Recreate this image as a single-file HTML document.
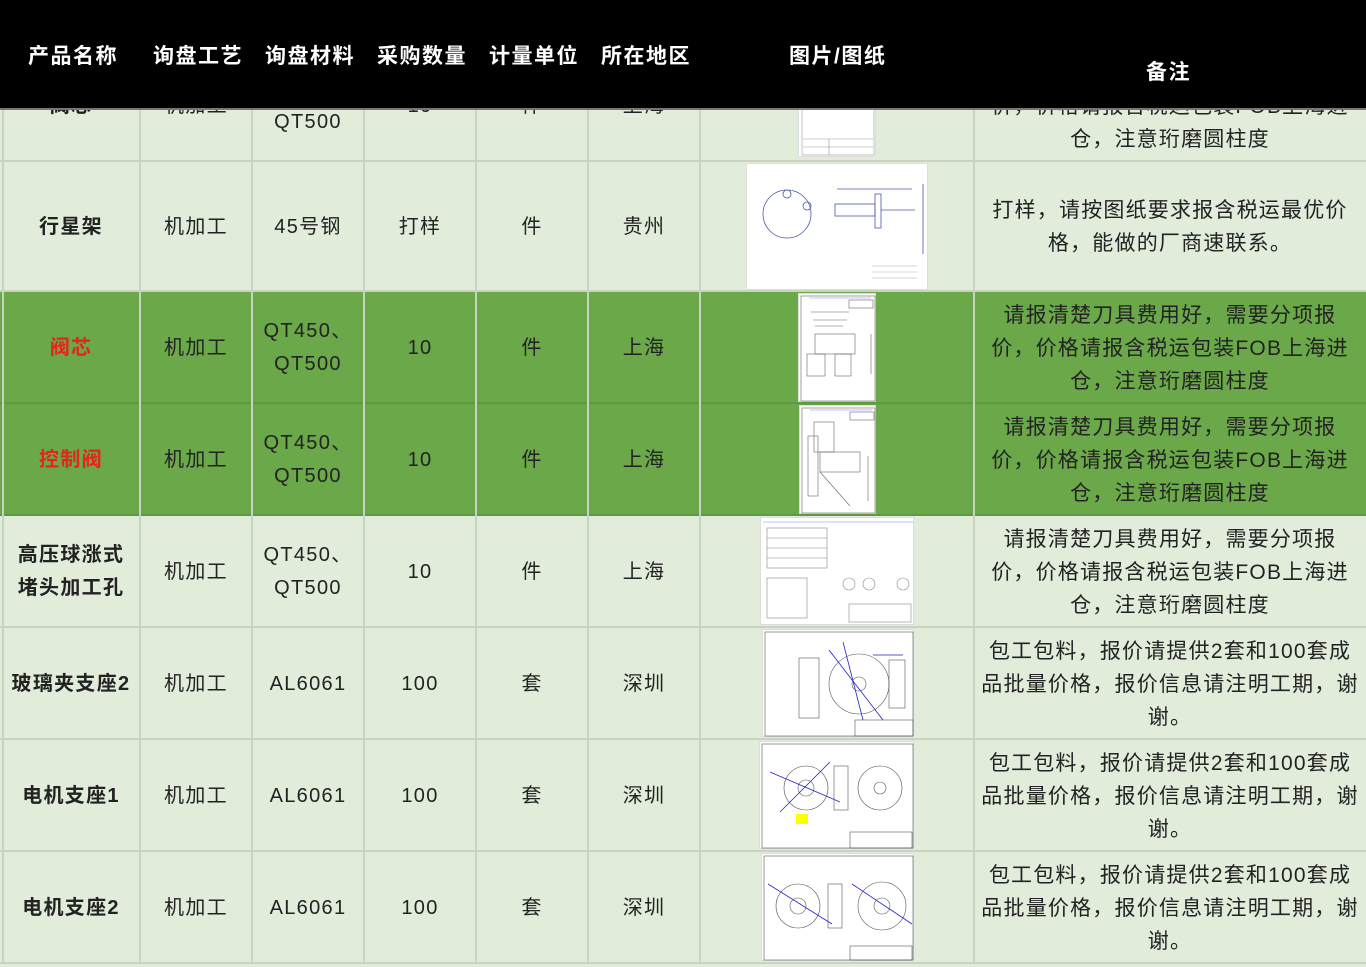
<!DOCTYPE html>
<html><head><meta charset="utf-8"><style>
*{margin:0;padding:0;box-sizing:border-box}
body{width:1366px;height:964px;overflow:hidden;background:#e2ecdb;font-family:"Liberation Sans","Noto Sans CJK SC",sans-serif;position:relative;color:#222}
.hdr{position:absolute;left:0;top:0;width:1366px;height:110px;background:#000;z-index:5;border-bottom:2px solid #777}
.h{position:absolute;color:#fff;font-weight:bold;font-size:21px;top:40px;white-space:nowrap;letter-spacing:1.5px}
.row{position:absolute;left:0;width:1366px;border-bottom:2px solid #c9d4c0}
.g{background:#6aa84a;border-bottom-color:#5e9a40}
.vl{position:absolute;top:0;height:964px;width:2px;background:#c9d4c0;z-index:1}
.c{position:absolute;display:flex;align-items:center;justify-content:center;text-align:center;font-size:20px;line-height:33px;z-index:2;letter-spacing:1.3px;white-space:nowrap}
.r{font-size:21px;letter-spacing:1.2px}
.b{font-weight:bold}
.red{color:#e8231c}
.img{position:absolute;background:#fff;z-index:2;border:1px solid #ddd}
</style></head><body>
<div class="hdr">
<div class="h" style="left:28px">产品名称</div>
<div class="h" style="left:153px">询盘工艺</div>
<div class="h" style="left:265px">询盘材料</div>
<div class="h" style="left:377px">采购数量</div>
<div class="h" style="left:489px">计量单位</div>
<div class="h" style="left:601px">所在地区</div>
<div class="h" style="left:789px">图片/图纸</div>
<div class="h" style="left:1146px;top:56px">备注</div>
</div>

<div class="vl" style="left:2px"></div>
<div class="vl" style="left:139px"></div>
<div class="vl" style="left:251px"></div>
<div class="vl" style="left:363px"></div>
<div class="vl" style="left:475px"></div>
<div class="vl" style="left:587px"></div>
<div class="vl" style="left:699px"></div>
<div class="vl" style="left:973px"></div>

<div class="row" style="top:0;height:162px"></div>
<div class="row" style="top:162px;height:130px"></div>
<div class="row g" style="top:292px;height:112px"></div>
<div class="row g" style="top:404px;height:112px"></div>
<div class="row" style="top:516px;height:112px"></div>
<div class="row" style="top:628px;height:112px"></div>
<div class="row" style="top:740px;height:112px"></div>
<div class="row" style="top:852px;height:112px"></div>

<div class="c b" style="left:2px;width:138px;top:50px;height:112px">阀芯</div>
<div class="c" style="left:140px;width:112px;top:50px;height:112px">机加工</div>
<div class="c" style="left:252px;width:112px;top:50px;height:112px">QT450、<br>QT500</div>
<div class="c" style="left:364px;width:112px;top:50px;height:112px">10</div>
<div class="c" style="left:476px;width:112px;top:50px;height:112px">件</div>
<div class="c" style="left:588px;width:112px;top:50px;height:112px">上海</div>
<div class="c r" style="left:974px;width:392px;top:50px;height:112px">请报清楚刀具费用好，需要分项报<br>价，价格请报含税运包装FOB上海进<br>仓，注意珩磨圆柱度</div>
<div class="img" style="left:798px;top:100px;width:78px;height:57px"><svg width="78" height="57"><g stroke="#999" fill="none" stroke-width=".6"><line x1="4" y1="38" x2="74" y2="38"/><line x1="30" y1="38" x2="30" y2="54"/><line x1="4" y1="46" x2="74" y2="46"/><rect x="3" y="3" width="72" height="51"/></g></svg></div>

<div class="c b" style="left:2px;width:138px;top:162px;height:130px">行星架</div>
<div class="c" style="left:140px;width:112px;top:162px;height:130px">机加工</div>
<div class="c" style="left:252px;width:112px;top:162px;height:130px">45号钢</div>
<div class="c" style="left:364px;width:112px;top:162px;height:130px">打样</div>
<div class="c" style="left:476px;width:112px;top:162px;height:130px">件</div>
<div class="c" style="left:588px;width:112px;top:162px;height:130px">贵州</div>
<div class="c r" style="left:974px;width:392px;top:162px;height:130px">打样，请按图纸要求报含税运最优价<br>格，能做的厂商速联系。</div>
<div class="img" style="left:746px;top:163px;width:182px;height:127px"><svg width="182" height="127"><g fill="none" stroke="#4a5aa8" stroke-width=".8"><circle cx="40" cy="50" r="24"/><circle cx="40" cy="30" r="4"/><circle cx="60" cy="42" r="4"/><rect x="88" y="40" width="40" height="12"/><rect x="128" y="30" width="6" height="34"/><line x1="134" y1="46" x2="168" y2="46"/><line x1="176" y1="20" x2="176" y2="90"/><line x1="90" y1="25" x2="165" y2="25"/></g><g stroke="#aaa" stroke-width=".6"><line x1="125" y1="102" x2="170" y2="102"/><line x1="125" y1="108" x2="170" y2="108"/><line x1="125" y1="114" x2="170" y2="114"/></g></svg></div>

<div class="c b red" style="left:2px;width:138px;top:292px;height:112px">阀芯</div>
<div class="c" style="left:140px;width:112px;top:292px;height:112px">机加工</div>
<div class="c" style="left:252px;width:112px;top:292px;height:112px">QT450、<br>QT500</div>
<div class="c" style="left:364px;width:112px;top:292px;height:112px">10</div>
<div class="c" style="left:476px;width:112px;top:292px;height:112px">件</div>
<div class="c" style="left:588px;width:112px;top:292px;height:112px">上海</div>
<div class="c r" style="left:974px;width:392px;top:292px;height:112px">请报清楚刀具费用好，需要分项报<br>价，价格请报含税运包装FOB上海进<br>仓，注意珩磨圆柱度</div>
<div class="img" style="left:798px;top:293px;width:78px;height:109px"><svg width="78" height="109"><g fill="none" stroke="#666" stroke-width=".6"><rect x="2" y="2" width="74" height="105"/><line x1="10" y1="4" x2="72" y2="4" stroke="#88f"/><rect x="50" y="6" width="24" height="8"/><line x1="12" y1="18" x2="50" y2="18"/><line x1="14" y1="26" x2="48" y2="26"/><line x1="16" y1="32" x2="44" y2="32"/><rect x="16" y="40" width="40" height="20"/><rect x="8" y="60" width="18" height="22"/><rect x="36" y="60" width="16" height="22"/><line x1="72" y1="40" x2="72" y2="80"/></g></svg></div>

<div class="c b red" style="left:2px;width:138px;top:404px;height:112px">控制阀</div>
<div class="c" style="left:140px;width:112px;top:404px;height:112px">机加工</div>
<div class="c" style="left:252px;width:112px;top:404px;height:112px">QT450、<br>QT500</div>
<div class="c" style="left:364px;width:112px;top:404px;height:112px">10</div>
<div class="c" style="left:476px;width:112px;top:404px;height:112px">件</div>
<div class="c" style="left:588px;width:112px;top:404px;height:112px">上海</div>
<div class="c r" style="left:974px;width:392px;top:404px;height:112px">请报清楚刀具费用好，需要分项报<br>价，价格请报含税运包装FOB上海进<br>仓，注意珩磨圆柱度</div>
<div class="img" style="left:799px;top:405px;width:77px;height:109px"><svg width="77" height="109"><g fill="none" stroke="#666" stroke-width=".6"><rect x="2" y="2" width="73" height="105"/><line x1="10" y1="4" x2="72" y2="4" stroke="#88f"/><rect x="50" y="6" width="24" height="8"/><rect x="14" y="16" width="20" height="30"/><rect x="8" y="30" width="10" height="60"/><rect x="20" y="46" width="40" height="20"/><line x1="20" y1="66" x2="50" y2="100"/><line x1="68" y1="50" x2="68" y2="95"/></g></svg></div>

<div class="c b" style="left:2px;width:138px;top:516px;height:112px">高压球涨式<br>堵头加工孔</div>
<div class="c" style="left:140px;width:112px;top:516px;height:112px">机加工</div>
<div class="c" style="left:252px;width:112px;top:516px;height:112px">QT450、<br>QT500</div>
<div class="c" style="left:364px;width:112px;top:516px;height:112px">10</div>
<div class="c" style="left:476px;width:112px;top:516px;height:112px">件</div>
<div class="c" style="left:588px;width:112px;top:516px;height:112px">上海</div>
<div class="c r" style="left:974px;width:392px;top:516px;height:112px">请报清楚刀具费用好，需要分项报<br>价，价格请报含税运包装FOB上海进<br>仓，注意珩磨圆柱度</div>
<div class="img" style="left:760px;top:517px;width:154px;height:108px"><svg width="154" height="108"><g fill="none" stroke="#888" stroke-width=".6"><line x1="2" y1="4" x2="152" y2="4" stroke="#88f"/><rect x="6" y="10" width="60" height="40"/><line x1="6" y1="20" x2="66" y2="20"/><line x1="6" y1="30" x2="66" y2="30"/><line x1="6" y1="40" x2="66" y2="40"/><rect x="6" y="60" width="40" height="40"/><circle cx="88" cy="66" r="6"/><circle cx="108" cy="66" r="6"/><circle cx="142" cy="66" r="6"/><rect x="88" y="86" width="62" height="18"/></g></svg></div>

<div class="c b" style="left:2px;width:138px;top:628px;height:112px">玻璃夹支座2</div>
<div class="c" style="left:140px;width:112px;top:628px;height:112px">机加工</div>
<div class="c" style="left:252px;width:112px;top:628px;height:112px">AL6061</div>
<div class="c" style="left:364px;width:112px;top:628px;height:112px">100</div>
<div class="c" style="left:476px;width:112px;top:628px;height:112px">套</div>
<div class="c" style="left:588px;width:112px;top:628px;height:112px">深圳</div>
<div class="c r" style="left:974px;width:392px;top:628px;height:112px">包工包料，报价请提供2套和100套成<br>品批量价格，报价信息请注明工期，谢<br>谢。</div>
<div class="img" style="left:762px;top:629px;width:152px;height:108px"><svg width="152" height="108"><g fill="none" stroke="#555" stroke-width=".6"><rect x="2" y="2" width="148" height="104"/><rect x="36" y="28" width="20" height="60"/><circle cx="96" cy="54" r="30"/><circle cx="96" cy="54" r="7"/><rect x="126" y="30" width="16" height="48"/><rect x="92" y="90" width="58" height="16"/></g><g stroke="#22c" stroke-width=".8"><line x1="66" y1="20" x2="120" y2="90"/><line x1="80" y1="12" x2="100" y2="90"/><line x1="110" y1="25" x2="140" y2="25"/></g></svg></div>

<div class="c b" style="left:2px;width:138px;top:740px;height:112px">电机支座1</div>
<div class="c" style="left:140px;width:112px;top:740px;height:112px">机加工</div>
<div class="c" style="left:252px;width:112px;top:740px;height:112px">AL6061</div>
<div class="c" style="left:364px;width:112px;top:740px;height:112px">100</div>
<div class="c" style="left:476px;width:112px;top:740px;height:112px">套</div>
<div class="c" style="left:588px;width:112px;top:740px;height:112px">深圳</div>
<div class="c r" style="left:974px;width:392px;top:740px;height:112px">包工包料，报价请提供2套和100套成<br>品批量价格，报价信息请注明工期，谢<br>谢。</div>
<div class="img" style="left:759px;top:741px;width:155px;height:108px"><svg width="155" height="108"><g fill="none" stroke="#555" stroke-width=".6"><rect x="2" y="2" width="151" height="104"/><circle cx="46" cy="46" r="22"/><circle cx="46" cy="46" r="8"/><rect x="74" y="24" width="14" height="44"/><circle cx="120" cy="46" r="22"/><circle cx="120" cy="46" r="6"/><rect x="90" y="90" width="62" height="16"/></g><g stroke="#22c" stroke-width=".8"><line x1="10" y1="30" x2="80" y2="60"/><line x1="20" y1="70" x2="70" y2="20"/></g><rect x="36" y="72" width="12" height="10" fill="#ff0"/></svg></div>

<div class="c b" style="left:2px;width:138px;top:852px;height:112px">电机支座2</div>
<div class="c" style="left:140px;width:112px;top:852px;height:112px">机加工</div>
<div class="c" style="left:252px;width:112px;top:852px;height:112px">AL6061</div>
<div class="c" style="left:364px;width:112px;top:852px;height:112px">100</div>
<div class="c" style="left:476px;width:112px;top:852px;height:112px">套</div>
<div class="c" style="left:588px;width:112px;top:852px;height:112px">深圳</div>
<div class="c r" style="left:974px;width:392px;top:852px;height:112px">包工包料，报价请提供2套和100套成<br>品批量价格，报价信息请注明工期，谢<br>谢。</div>
<div class="img" style="left:761px;top:853px;width:153px;height:108px"><svg width="153" height="108"><g fill="none" stroke="#555" stroke-width=".6"><rect x="2" y="2" width="149" height="104"/><circle cx="36" cy="52" r="22"/><circle cx="36" cy="52" r="8"/><rect x="66" y="30" width="14" height="44"/><circle cx="120" cy="52" r="24"/><circle cx="120" cy="52" r="8"/><rect x="88" y="92" width="62" height="14"/></g><g stroke="#22c" stroke-width=".8"><line x1="6" y1="30" x2="70" y2="70"/><line x1="90" y1="30" x2="150" y2="70"/></g></svg></div>
</body></html>
